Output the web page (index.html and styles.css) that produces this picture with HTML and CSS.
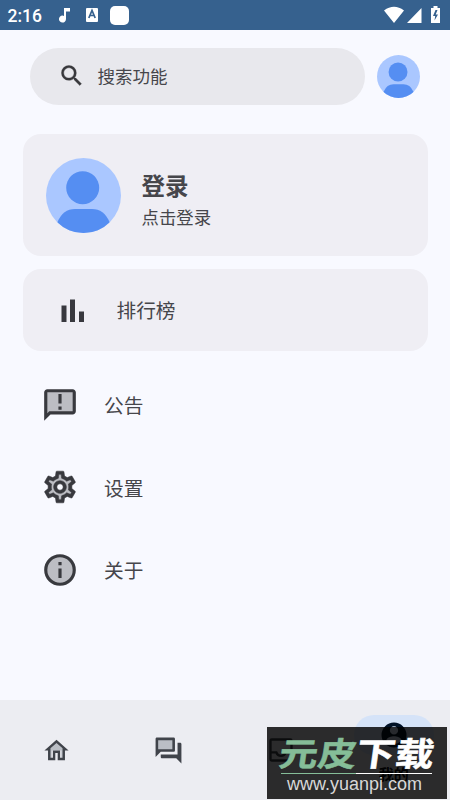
FILE: index.html
```html
<!DOCTYPE html>
<html lang="zh-CN">
<head>
<meta charset="utf-8">
<meta name="viewport" content="width=device-width, initial-scale=1">
<title>我的</title>
<link rel="stylesheet" href="styles.css">
</head>
<body>
<svg class="defs" width="0" height="0">
  <symbol id="avatar" viewBox="0 0 75 75">
    <clipPath id="round"><circle cx="37.5" cy="37.5" r="37.5"/></clipPath>
    <circle cx="37.5" cy="37.5" r="37.5" fill="#aac7ff"/>
    <circle cx="36.7" cy="29.7" r="16.5" fill="#558ef2"/>
    <path clip-path="url(#round)" fill="#558ef2" d="M8 75 11.500 64Q17 51 29 51H46Q58 51 63.500 64L67 75Z"/>
  </symbol>
</svg>
<div class="app">
  <header class="status">
    <span class="time">2:16</span>
    <svg class="note" width="12" height="15" viewBox="0 0 12 15"><path fill="#fff" d="M5 0h6v3.500H7v7.500a3.500 3.500 0 1 1-2-3.100z"/></svg>
    <svg class="letter" width="12" height="14" viewBox="0 0 12 14"><rect width="12" height="14" rx="1" fill="#fff"/><path d="M2.800 10 6 2.500 9.200 10M4 7.500h4" fill="none" stroke="#36618e" stroke-width="1.700"/></svg>
    <span class="tile"></span>
    <svg class="system" width="58" height="18" viewBox="0 0 58 18"><path fill="#fff" d="M0 4.500Q10-3 20 4.500L10 17ZM23 17 37.500 2v15Z"/><path fill="#fff" d="M47 2h2.500V0h4v2H56v15h-9z"/><path fill="#36618e" d="m51.500 4-2.500 6h2.200l-.7 4.500L54 8.500h-2.300L53.500 4z"/></svg>
  </header>
  <main>
    <div class="top">
      <div class="search">
        <svg width="27.500" height="27.500" viewBox="0 0 24 24"><path fill="#38383c" stroke="#38383c" stroke-width=".3" d="M15.500 14h-.79l-.28-.27A6.471 6.471 0 0 0 16 9.500 6.500 6.500 0 1 0 9.500 16c1.610 0 3.090-.59 4.230-1.570l.27.28v.79l5 4.990L20.490 19l-4.990-5zm-6 0C7.010 14 5 11.990 5 9.500S7.010 5 9.500 5 14 7.010 14 9.500 11.990 14 9.500 14z"/></svg>
        <span>搜索功能</span>
      </div>
      <svg class="mini" width="43" height="43"><use href="#avatar"/></svg>
    </div>
    <section class="card login">
      <svg width="75" height="75"><use href="#avatar"/></svg>
      <div class="who"><b>登录</b><span>点击登录</span></div>
    </section>
    <section class="card rank">
      <svg width="24" height="23" viewBox="0 0 24 23"><path fill="#38383e" d="M.5 6.500h5V23h-5zM9 .5h5V23H9zM18 12.500h5V23h-5z"/></svg>
      <span>排行榜</span>
    </section>
    <ul class="menu">
      <li>
        <svg width="38" height="38" viewBox="0 0 24 24"><path fill="#bcbdc3" d="M3 3h18v14H3z"/><path fill="#38393e" d="M20 2H4c-1.100 0-2 .9-2 2v18l4-4h14c1.100 0 2-.9 2-2V4c0-1.100-.9-2-2-2zm0 14H5.170L4 17.170V4h16v12zM11 5h2v6h-2zm0 8h2v2h-2z"/></svg>
        <span>公告</span>
      </li>
      <li>
        <svg width="38" height="38" viewBox="0 0 24 24"><path fill="#bcbdc3" fill-rule="evenodd" d="M10 3h4l.8 3 1.700 1 3-.8 1.500 3.300-2 2.500 2 2.500-1.500 3.300-3-.8-1.700 1-.8 3h-4l-.8-3-1.700-1-3 .8L3 14.500 5 12 3 9.500l1.500-3.300 3 .8 1.700-1zM12 9a3 3 0 1 0 0 6 3 3 0 0 0 0-6"/><path fill="#38393e" stroke="#38393e" stroke-width=".35" d="M19.430 12.980c.04-.32.07-.64.07-.98 0-.34-.03-.66-.07-.98l2.110-1.650c.19-.15.24-.42.12-.64l-2-3.460c-.09-.16-.26-.25-.44-.25-.06 0-.12.010-.17.030l-2.490 1c-.52-.4-1.080-.73-1.690-.98l-.38-2.650C14.460 2.180 14.250 2 14 2h-4c-.25 0-.46.18-.49.42l-.38 2.650c-.61.25-1.170.59-1.690.98l-2.490-1c-.06-.02-.12-.03-.18-.03-.17 0-.34.09-.43.25l-2 3.460c-.13.22-.07.49.12.64l2.110 1.650c-.04.32-.07.65-.07.98 0 .33.030.66.070.98l-2.110 1.650c-.19.15-.24.42-.12.64l2 3.460c.09.16.26.25.44.25.06 0 .12-.01.17-.03l2.490-1c.52.4 1.080.73 1.690.98l.38 2.650c.03.24.24.42.49.42h4c.25 0 .46-.18.49-.42l.38-2.650c.61-.25 1.170-.59 1.690-.98l2.490 1c.06.02.12.03.18.03.17 0 .34-.09.43-.25l2-3.460c.12-.22.07-.49-.12-.64l-2.110-1.650zm-1.980-1.710c.04.31.05.52.05.73 0 .21-.02.43-.05.73l-.14 1.130.89.7 1.080.84-.7 1.210-1.270-.51-1.040-.42-.9.680c-.43.32-.84.56-1.250.73l-1.060.43-.16 1.130-.2 1.350h-1.400l-.19-1.350-.16-1.130-1.060-.43c-.43-.18-.83-.41-1.230-.71l-.91-.7-1.060.43-1.270.51-.7-1.210 1.080-.84.89-.7-.14-1.130c-.03-.31-.05-.54-.05-.74s.02-.43.05-.73l.14-1.130-.89-.7-1.080-.84.7-1.210 1.270.51 1.040.42.9-.68c.43-.32.84-.56 1.250-.73l1.060-.43.16-1.130.2-1.350h1.390l.19 1.350.16 1.130 1.060.43c.43.18.83.41 1.230.71l.91.7 1.060-.43 1.270-.51.7 1.210-1.070.85-.89.7.14 1.130zM12 8c-2.210 0-4 1.790-4 4s1.790 4 4 4 4-1.790 4-4-1.790-4-4-4zm0 6c-1.100 0-2-.9-2-2s.9-2 2-2 2 .9 2 2-.9 2-2 2z"/></svg>
        <span>设置</span>
      </li>
      <li>
        <svg width="38" height="38" viewBox="0 0 24 24"><circle cx="12" cy="12" r="9" fill="#bcbdc3" stroke="#38393e" stroke-width="2"/><path fill="#38393e" d="M11 7h2v2h-2zm0 4h2v6h-2z"/></svg>
        <span>关于</span>
      </li>
    </ul>
  </main>
  <nav>
    <a><svg width="29" height="29" viewBox="0 0 24 24"><path fill="#babec5" d="M12 4 5 10v9h3v-7h8v7h3v-9z"/><path fill="#40444b" d="M12 3 2 12h3v8h6v-6h2v6h6v-8h3L12 3zm5 15h-2v-6H9v6H7v-7.810l5-4.500 5 4.500V18z"/></svg></a>
    <a><svg width="31" height="31" viewBox="0 0 24 24"><path fill="#babec5" d="M3 3h13v9H3z"/><path fill="#40444b" d="M16 13c.55 0 1-.45 1-1V3c0-.55-.45-1-1-1H3c-.55 0-1 .45-1 1v14l4-4h10zM4 4h11v7H4V4zm17 2h-2v9H6v2c0 .55.450 1 1 1h11l4 4V7c0-.55-.45-1-1-1z"/></svg></a>
    <a><svg width="28" height="28" viewBox="0 0 24 24"><path fill="none" stroke="#40444b" stroke-width="2" d="M4 3h16q1 0 1 1v16q0 1-1 1H4q-1 0-1-1V4q0-1 1-1zM3 14h5q1 3 4 3t4-3h5"/></svg></a>
    <a class="active"><span class="pill"><svg width="30" height="30" viewBox="0 0 24 24"><path fill="#001126" fill-rule="evenodd" d="M12 2a10 10 0 1 0 0 20 10 10 0 0 0 0-20zm0 3a3.300 3.300 0 1 1 0 6.600A3.300 3.300 0 0 1 12 5zm0 14.200a7.200 7.200 0 0 1-6-3.220c.03-1.990 4-3.080 6-3.080s5.970 1.090 6 3.080a7.200 7.200 0 0 1-6 3.220z"/></svg></span><span class="label">我的</span></a>
  </nav>
  <aside class="mark">
    <div class="brand"><span>元皮</span><em>下载</em></div>
    <div class="rule"></div>
    <div class="url">www.yuanpi.com</div>
  </aside>
</div>
</body>
</html>
```
FILE: styles.css
```css
* { box-sizing: border-box; }
body { margin: 0; font-family: Roboto, "Noto Sans CJK SC", sans-serif; color: #46464b; }
svg { display: block; flex: none; }
.defs { position: absolute; }
.app { position: relative; width: 450px; height: 800px; display: flex; flex-direction: column; background: #f8f9ff; overflow: hidden; }
.status { height: 30px; background: #36618e; display: flex; align-items: center; padding: 0 8px 0 7.500px; color: #fff; }
.time { font-size: 17.500px; font-weight: 500; line-height: 30px; width: 51px; padding-top: 1px; white-space: nowrap; }
.letter { margin-left: 15.500px; }
.tile { width: 19px; height: 19px; border-radius: 5px; background: #fff; margin-left: 12px; }
.system { margin-left: auto; }
main { flex: 1; padding: 17.500px 22.500px 0; }
.top { display: flex; align-items: center; gap: 12px; padding-left: 7.500px; }
.search { width: 335px; height: 57.500px; border-radius: 29px; background: #e8e8ed; display: flex; align-items: center; gap: 12.500px; padding: 0 0 1px 27.500px; font-size: 17.500px; }
.search span { margin-bottom: 1px; }
.card { background: #efeef4; border-radius: 18px; display: flex; align-items: center; }
.login { margin-top: 29px; height: 122px; padding-left: 23.500px; gap: 20.500px; }
.who { display: flex; flex-direction: column; padding-top: 14px; }
.who b { font-size: 23.500px; line-height: 32px; font-weight: 600; }
.who span { font-size: 17.400px; line-height: 30px; }
.rank { margin-top: 13px; height: 82px; padding-left: 38.500px; gap: 31.500px; font-size: 19.700px; }
.rank span { margin-bottom: 2px; }
.menu { list-style: none; margin: 12.500px 0 0; padding: 0 0 0 18.500px; }
.menu li { height: 82.500px; display: flex; align-items: center; gap: 25px; font-size: 19.700px; }
nav { height: 100px; background: #ecedf2; display: grid; grid-template-columns: repeat(4, 112.500px); }
nav a { display: flex; flex-direction: column; align-items: center; justify-content: center; }
nav .active { justify-content: flex-start; padding-top: 15px; }
.pill { width: 80px; height: 40px; border-radius: 20px; background: #d5e3f8; display: flex; align-items: center; justify-content: center; }
.label { font-size: 15px; font-weight: 700; line-height: 22px; margin-top: 9px; color: #08090c; }
.mark { position: absolute; left: 267px; top: 727px; width: 180px; height: 72px; background: rgba(0, 0, 0, .82); overflow: hidden; }
.brand { display: flex; height: 46px; padding-left: 13px; font: 700 38.700px/51px "Noto Sans CJK SC", sans-serif; color: #85bd98; -webkit-text-stroke: .6px; transform: skewX(-8deg) scaleY(.85); white-space: nowrap; }
.brand em { font-style: normal; color: #fff; }
.rule { width: 151px; height: 1px; margin-left: 14px; background: linear-gradient(90deg, #85bd98 50%, #fff 50%); }
.url { margin-left: 20px; font: 18px/20px "Liberation Sans", sans-serif; color: #d8d8d8; white-space: nowrap; }
```
